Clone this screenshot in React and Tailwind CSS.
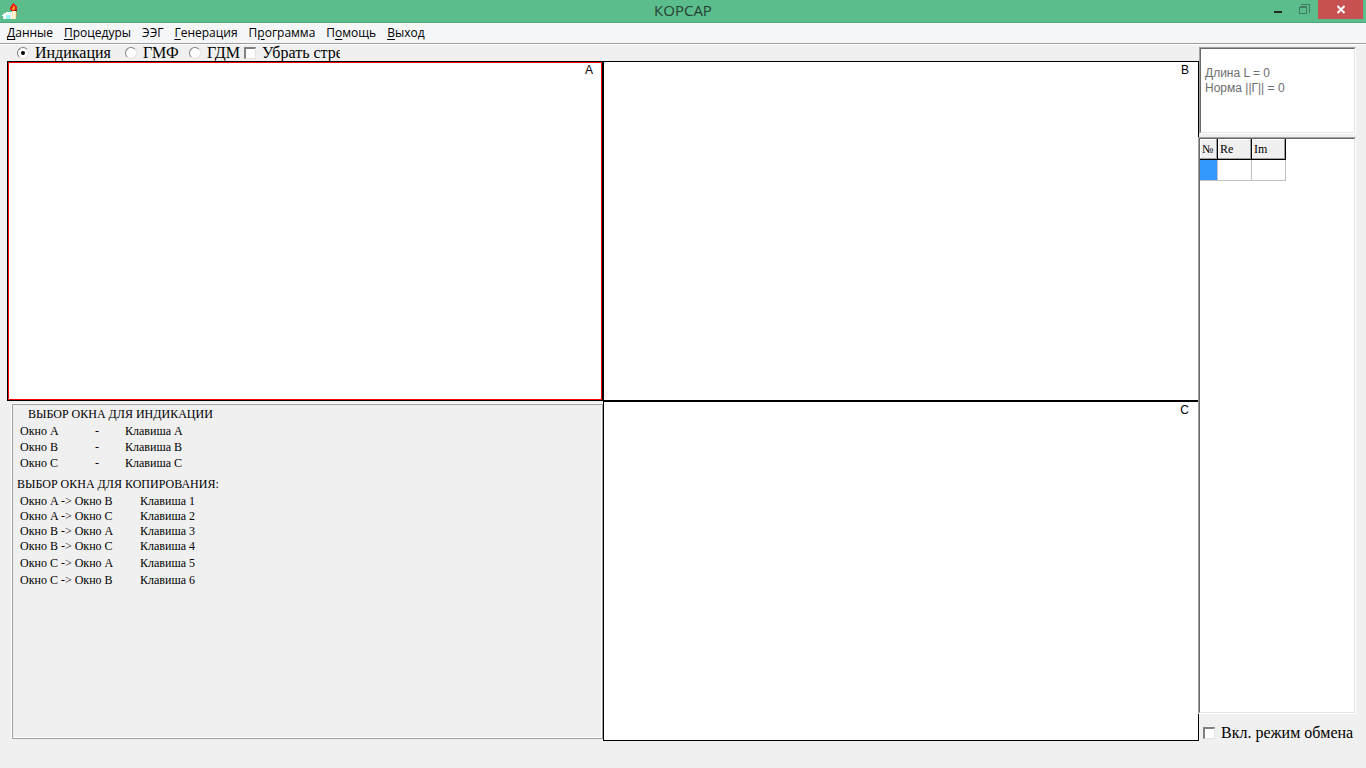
import React, { useState } from 'react';

const menuItems = [
  { before: '', key: 'Д', after: 'анные' },
  { before: '', key: 'П', after: 'роцедуры' },
  { before: 'ЭЭГ', key: '', after: '' },
  { before: '', key: 'Г', after: 'енерация' },
  { before: 'П', key: 'р', after: 'ограмма' },
  { before: 'П', key: 'о', after: 'мощь' },
  { before: '', key: 'В', after: 'ыход' },
];

const modes = [
  { id: 'indication', label: 'Индикация' },
  { id: 'gmf', label: 'ГМФ' },
  { id: 'gdm', label: 'ГДМ' },
];

const selectKeys = [
  ['Окно A', 'Клавиша A'],
  ['Окно B', 'Клавиша B'],
  ['Окно C', 'Клавиша C'],
];

const copyKeys = [
  ['Окно A -> Окно B', 'Клавиша 1'],
  ['Окно A -> Окно C', 'Клавиша 2'],
  ['Окно B -> Окно A', 'Клавиша 3'],
  ['Окно B -> Окно C', 'Клавиша 4'],
];

const copyKeysC = [
  ['Окно C -> Окно A', 'Клавиша 5'],
  ['Окно C -> Окно B', 'Клавиша 6'],
];

const AppIcon = () => (
  <svg className="h-4 w-4" viewBox="0 0 16 16" shapeRendering="crispEdges" aria-hidden="true">
    <path d="M0 12h1v-1h1v-1h2V9h6v7H1v-3H0z" fill="#fff" />
    <path d="M4 12h4v4H4z" fill="#9df3f5" />
    <path d="M1 13h1v3H1zM8 10h1v6H8z" fill="#d5e8f5" />
    <path d="M10 8h4v8h-4z" fill="#ffe9a0" />
    <path d="M11 8h2v7h-2z" fill="#fffbe6" />
    <path d="M14 8h1v6h-1z" fill="#b09a70" />
    <path d="M9 7h6v1H9z" fill="#4a2418" />
    <path d="M11 0h1v1h1v1h1v1h1v4h-1v1h-4V7H8V4h1V2h1V1h1z" fill="#e8281c" />
    <path d="M11 3h1v1h1v2h-1v1h-2V5h1z" fill="#ff9c1c" />
    <path d="M9 7h1v1H9zM13 7h1v1h-1z" fill="#4a2418" />
  </svg>
);

const TitleBar = () => (
  <header className="grid h-[23px] grid-cols-[1fr_auto_1fr] border-b border-[#4fa67a] bg-[#5bbd8c]">
    <div className="pt-[3px] pl-[2px]">
      <AppIcon />
    </div>
    <h1 className="font-['Open_Sans',sans-serif] text-[15px] leading-[21px] text-[#263f33]">КОРСАР</h1>
    <div className="flex items-start justify-end pr-[3px]">
      <button type="button" aria-label="Свернуть" className="flex h-[18px] w-[26px] items-center justify-center">
        <svg className="h-[18px] w-[26px]" viewBox="0 0 26 18" shapeRendering="crispEdges">
          <path d="M8 11h8v2H8z" fill="#1f2a25" />
        </svg>
      </button>
      <button type="button" aria-label="Восстановить" className="h-[18px] w-[26px]">
        <svg className="h-[18px] w-[26px]" viewBox="0 0 26 18" shapeRendering="crispEdges" fill="none" stroke="#427c60">
          <path d="M9 4.500h8.500v8" />
          <path d="M7.500 7v6.500h7V6.500h-7M7 7.500h8" />
        </svg>
      </button>
      <button type="button" aria-label="Закрыть" className="h-[19px] w-[45px] bg-[#c75050]">
        <svg className="h-[19px] w-[45px]" viewBox="0 0 45 19" fill="none" stroke="#fff" strokeWidth="2">
          <path d="M19.500 6l7 7M26.500 6l-7 7" />
        </svg>
      </button>
    </div>
  </header>
);

const MenuBar = () => (
  <nav className="border-b border-white">
    <div className="flex h-[21px] gap-[11px] border-b border-[#9d9d9d] bg-[#f4f6f8] px-[7px] font-['Open_Sans',sans-serif] text-[12px] leading-5 text-black">
      {menuItems.map((item) => (
        <a key={item.before + item.key + item.after} href="#">
          {item.before}
          <span className="underline underline-offset-2">{item.key}</span>
          {item.after}
        </a>
      ))}
    </div>
  </nav>
);

const CheckBox = ({ id }) => (
  <input
    id={id}
    type="checkbox"
    className="h-3 w-3 shrink-0 appearance-none border-t-2 border-r border-b border-l-2 border-t-[#808080] border-r-[#e3e3e3] border-b-[#e3e3e3] border-l-[#808080] bg-white checked:bg-black"
  />
);

const Options = () => {
  const [mode, setMode] = useState('indication');

  return (
    <div className="flex h-4 items-center pl-[10px] text-[16px] leading-4">
      <div className="grid grid-cols-[108px_64px_55px]">
        {modes.map((item) => (
          <div key={item.id} className="flex items-center gap-[6px]">
            <span className="grid h-3 w-3 place-items-center">
              <input
                id={item.id}
                type="radio"
                name="mode"
                checked={mode === item.id}
                onChange={() => setMode(item.id)}
                className="peer col-start-1 row-start-1 h-3 w-3 appearance-none rounded-full border border-t-[#808080] border-r-[#e3e3e3] border-b-[#e3e3e3] border-l-[#808080] bg-white"
              />
              <span className="pointer-events-none col-start-1 row-start-1 hidden h-1 w-1 rounded-full bg-black peer-checked:block" />
            </span>
            <label htmlFor={item.id}>{item.label}</label>
          </div>
        ))}
      </div>
      <div className="flex w-[96px] items-center gap-[6px] overflow-hidden whitespace-nowrap">
        <CheckBox id="arrows" />
        <label htmlFor="arrows">Убрать стре</label>
      </div>
    </div>
  );
};

const Pane = ({ name, active }) => (
  <section className="border border-black bg-white">
    <div
      className={
        active
          ? "h-full border border-[#f00] px-2 text-right font-['Liberation_Sans',sans-serif] text-[12px] leading-[14px]"
          : "h-full border border-white px-2 text-right font-['Liberation_Sans',sans-serif] text-[12px] leading-[14px]"
      }
    >
      {name}
    </div>
  </section>
);

const Help = () => (
  <section className="mt-[3px] mb-[2px] ml-[5px] border border-[#a0a0a0] pt-px text-[12px] shadow-[-1px_-1px_0_#fff,inset_-1px_-1px_0_#fff]">
    <h2 className="pl-[15px] leading-[17px]">ВЫБОР ОКНА ДЛЯ ИНДИКАЦИИ</h2>
    <ul className="pl-[7px] leading-4">
      {selectKeys.map(([pane, key]) => (
        <li key={key} className="grid grid-cols-[75px_30px_1fr]">
          <span>{pane}</span>
          <span>-</span>
          <span>{key}</span>
        </li>
      ))}
    </ul>
    <h2 className="mt-[5px] pl-1 leading-[17px]">ВЫБОР ОКНА ДЛЯ КОПИРОВАНИЯ:</h2>
    <ul className="mt-px pl-[7px] leading-[15px]">
      {copyKeys.map(([panes, key]) => (
        <li key={key} className="grid grid-cols-[120px_1fr]">
          <span>{panes}</span>
          <span>{key}</span>
        </li>
      ))}
    </ul>
    <ul className="mt-px pl-[7px] leading-[17px]">
      {copyKeysC.map(([panes, key]) => (
        <li key={key} className="grid grid-cols-[120px_1fr]">
          <span>{panes}</span>
          <span>{key}</span>
        </li>
      ))}
    </ul>
  </section>
);

// Sunken edge shared by the info box and the value table
const Sunken = ({ className, children }) => (
  <div className={className}>
    <div className="h-full border border-t-[#696969] border-r-[#e3e3e3] border-b-[#e3e3e3] border-l-[#696969] bg-white">
      {children}
    </div>
  </div>
);

const ValueTable = () => (
  <table className="w-[86px] table-fixed border-separate border-spacing-0 text-left text-[12px]">
    <colgroup>
      <col className="w-[18px]" />
      <col className="w-[34px]" />
      <col className="w-[34px]" />
    </colgroup>
    <thead>
      <tr className="h-[21px]">
        {['№', 'Re', 'Im'].map((name) => (
          <th
            key={name}
            className="border-r border-b border-black bg-[#f0f0f0] p-0 pl-[2px] font-normal shadow-[inset_-1px_-1px_0_#a0a0a0,inset_1px_1px_0_#fff]"
          >
            {name}
          </th>
        ))}
      </tr>
    </thead>
    <tbody>
      <tr className="h-[21px]">
        <td className="border-r border-b border-[#c0c0c0] bg-[#3399ff] p-0" />
        <td className="border-r border-b border-[#c0c0c0] p-0" />
        <td className="border-r border-b border-[#c0c0c0] p-0" />
      </tr>
    </tbody>
  </table>
);

const SidePanel = () => (
  <aside className="flex w-[157px] shrink-0 flex-col pt-[2px]">
    <Sunken className="h-[87px] shrink-0 border border-t-[#a0a0a0] border-r-white border-b-white border-l-[#a0a0a0]">
      <p className="pt-[17px] pl-1 font-['Liberation_Sans',sans-serif] text-[12px] leading-[15px] text-[#6d6d6d]">
        Длина L = 0
        <br />
        Норма ||Г|| = 0
      </p>
    </Sunken>
    <Sunken className="mt-[3px] -ml-px flex-1 border border-t-[#a0a0a0] border-r-white border-b-white border-l-[#a0a0a0]">
      <ValueTable />
    </Sunken>
    <div className="flex h-[54px] items-start gap-[6px] pt-[10px] pl-1 text-[16px] leading-[18px] whitespace-nowrap">
      <span className="flex h-[18px] items-center">
        <CheckBox id="exchange" />
      </span>
      <label htmlFor="exchange">Вкл. режим обмена</label>
    </div>
  </aside>
);

const App = () => {
  return (
    <div className="flex h-screen min-h-[480px] flex-col bg-[#f0f0f0] font-['Liberation_Serif',serif] text-black">
      <TitleBar />
      <MenuBar />
      <main className="flex min-h-0 flex-1 pr-[10px] pl-[7px]">
        <div className="flex min-w-0 flex-1 flex-col pb-[27px]">
          <Options />
          <div className="grid flex-1 grid-cols-2 grid-rows-2">
            <Pane name="A" active />
            <Pane name="B" />
            <Help />
            <Pane name="C" />
          </div>
        </div>
        <SidePanel />
      </main>
    </div>
  );
};

export default App;
